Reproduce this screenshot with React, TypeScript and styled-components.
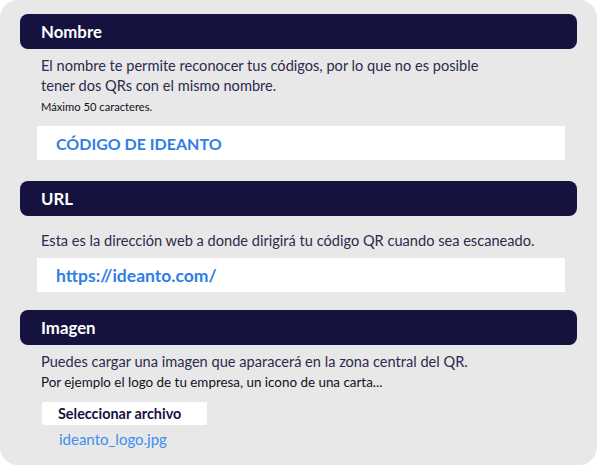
import React from 'react';
import styled, { createGlobalStyle } from 'styled-components';

const GlobalStyle = createGlobalStyle`
  html, body {
    margin: 0;
    padding: 0;
    background: #ffffff;
  }
  body {
    font-family: 'Lato', 'Liberation Sans', sans-serif;
  }
`;

const Card = styled.div`
  width: 597px;
  height: 465px;
  box-sizing: border-box;
  background-color: #e8e8e8;
  border-radius: 18px;
  padding: 14px 20px 0 20px;
  display: flex;
  flex-direction: column;
`;

const Section = styled.section<{ $gap: number }>`
  display: flex;
  flex-direction: column;
  margin-bottom: ${(p) => p.$gap}px;
`;

const Header = styled.h2`
  margin: 0;
  height: 35px;
  box-sizing: border-box;
  background-color: #15123f;
  color: #ffffff;
  border-radius: 8px;
  padding: 0 21px;
  display: flex;
  align-items: center;
  font-size: 16.8px;
  font-weight: 700;
`;

const Body = styled.div`
  padding: 7px 0 0 21px;
  display: flex;
  flex-direction: column;
`;

const Description = styled.p<{ $top?: number }>`
  margin: ${(p) => p.$top ?? 0}px 0 0 0;
  color: #2c2a4d;
  font-size: 14.6px;
  line-height: 20px;
`;

const Note = styled.p<{ $size: number; $top?: number }>`
  margin: ${(p) => p.$top ?? 0}px 0 0 0;
  color: #111024;
  font-size: ${(p) => p.$size}px;
  line-height: 20px;
`;

const Input = styled.div<{ $top: number; $size: number }>`
  margin: ${(p) => p.$top}px 12px 0 -4px;
  height: 34px;
  background-color: #ffffff;
  display: flex;
  align-items: center;
  padding-left: 19px;
  color: #2f7ee6;
  font-size: ${(p) => p.$size}px;
  font-weight: 700;
`;

const FileButton = styled.button`
  margin-top: 10px;
  align-self: flex-start;
  width: 165px;
  height: 23px;
  margin-left: 1px;
  border: none;
  border-radius: 2px;
  background-color: #ffffff;
  color: #15123f;
  font-family: 'Lato', 'Liberation Sans', sans-serif;
  font-size: 14.4px;
  font-weight: 700;
  text-align: left;
  padding: 0 0 0 16px;
`;

const FileName = styled.span`
  margin: 4px 0 0 18px;
  color: #3c8ef0;
  font-size: 15px;
  line-height: 20px;
`;

export default function App() {
  return (
    <>
      <GlobalStyle />
      <Card>
        <Section $gap={21}>
          <Header>Nombre</Header>
          <Body>
            <Description>
              El nombre te permite reconocer tus códigos, por lo que no es posible
              <br />
              tener dos QRs con el mismo nombre.
            </Description>
            <Note $size={11.2} $top={1}>Máximo 50 caracteres.</Note>
            <Input $top={9} $size={16}>CÓDIGO DE IDEANTO</Input>
          </Body>
        </Section>
        <Section $gap={18}>
          <Header>URL</Header>
          <Body>
            <Description $top={8}>
              Esta es la dirección web a donde dirigirá tu código QR cuando sea escaneado.
            </Description>
            <Input $top={7} $size={17.5}>https://ideanto.com/</Input>
          </Body>
        </Section>
        <Section $gap={0}>
          <Header>Imagen</Header>
          <Body>
            <Description>
              Puedes cargar una imagen que aparacerá en la zona central del QR.
            </Description>
            <Note $size={13.4}>Por ejemplo el logo de tu empresa, un icono de una carta...</Note>
            <FileButton type="button">Seleccionar archivo</FileButton>
            <FileName>ideanto_logo.jpg</FileName>
          </Body>
        </Section>
      </Card>
    </>
  );
}
